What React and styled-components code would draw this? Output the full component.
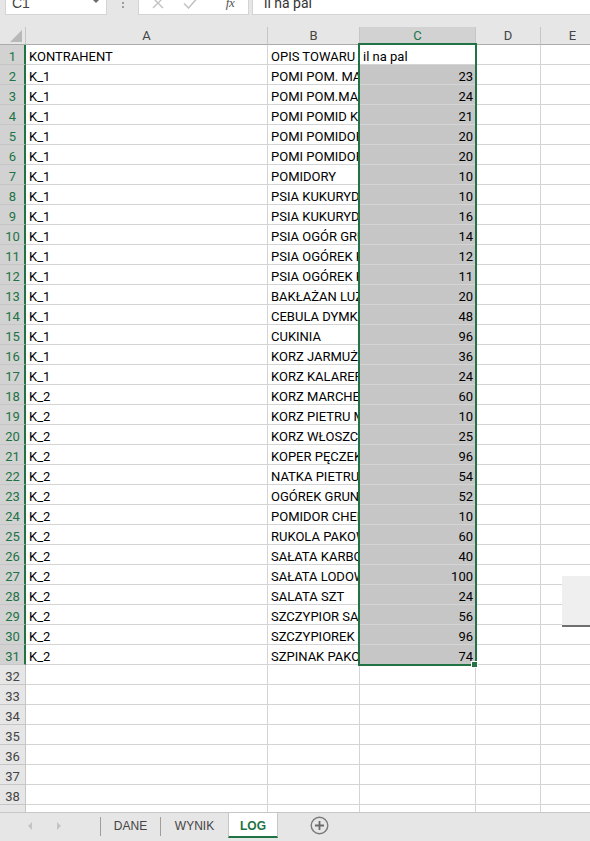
import React from "react";
import styled, { createGlobalStyle } from "styled-components";

const GREEN = "#217346";
const GRID = "#d4d4d4";
const HEAD_BG = "#e6e6e6";
const HEAD_SEL = "#d2d2d2";
const HEAD_LINE = "#c6c6c6";
const SEL_FILL = "#c6c6c6";
const COLS = "26px 242px 92px 116px 65px 64px";

const GlobalStyle = createGlobalStyle`
  html, body { margin: 0; padding: 0; background: ${HEAD_BG}; }
  body { overflow: hidden; font-family: Roboto, "Liberation Sans", sans-serif; }
  * { box-sizing: border-box; }
`;

const Window = styled.div`
  position: relative;
  width: 590px;
  height: 841px;
  overflow: hidden;
  display: flex;
  flex-direction: column;
  background: ${HEAD_BG};
`;

/* ---------- formula bar ---------- */
const FormulaBar = styled.div`
  flex: 0 0 27px;
  display: flex;
  align-items: flex-start;
  overflow: visible;
`;

const NameBox = styled.div`
  margin: -10px 0 0 5px;
  width: 102px;
  height: 25px;
  background: #fff;
  border: 1px solid ${GRID};
  display: flex;
  align-items: center;
  justify-content: space-between;
  padding: 0 6px;
  font-family: "Liberation Sans", sans-serif;
  font-size: 14px;
  color: #444;
`;

const Caret = styled.span`
  width: 0;
  height: 0;
  border-left: 4px solid transparent;
  border-right: 4px solid transparent;
  border-top: 4px solid #6b6b6b;
  margin-top: -3px;
`;

const Grip = styled.div`
  margin: 2px 14px 0 15px;
  display: flex;
  flex-direction: column;
  gap: 2px;
  & > span {
    width: 2px;
    height: 2px;
    background: #9c9c9c;
  }
`;

const FxBox = styled.div`
  margin-top: -10px;
  width: 111px;
  height: 25px;
  background: #fff;
  border: 1px solid ${GRID};
  display: flex;
  align-items: center;
  padding-left: 12px;
  gap: 0;
`;

const FxIconSlot = styled.div`
  width: ${(p) => p.$w}px;
  display: flex;
  justify-content: center;
  align-items: center;
`;

const FxLabel = styled.span`
  font-family: "Liberation Serif", serif;
  font-style: italic;
  font-size: 13px;
  color: #555;
  letter-spacing: -0.5px;
`;

const InputBox = styled.div`
  margin: -10px 0 0 3px;
  flex: 1;
  height: 25px;
  background: #fff;
  border: 1px solid ${GRID};
  border-right: none;
  display: flex;
  align-items: center;
  padding-left: 11px;
  font-size: 14px;
  color: #333;
`;

/* ---------- sheet grid ---------- */
const Sheet = styled.div`
  position: relative;
  flex: 1;
  overflow: hidden;
  background: #fff;
`;

const HeaderRow = styled.div`
  display: grid;
  grid-template-columns: ${COLS};
  height: 18px;
`;

const Corner = styled.div`
  background: ${HEAD_BG};
  border-right: 1px solid ${HEAD_LINE};
  border-bottom: 1px solid #ababab;
  display: flex;
  align-items: flex-end;
  justify-content: flex-end;
  padding: 0 3px 2px 0;
  &::after {
    content: "";
    width: 12px;
    height: 12px;
    background: #b8b8b8;
    clip-path: polygon(100% 0, 100% 100%, 0 100%);
  }
`;

const ColHead = styled.div`
  background: ${(p) => (p.$sel ? HEAD_SEL : HEAD_BG)};
  color: ${(p) => (p.$sel ? GREEN : "#444")};
  border-right: 1px solid ${HEAD_LINE};
  border-bottom: 1px solid ${(p) => (p.$sel ? GREEN : "#ababab")};
  font-size: 13px;
  line-height: 17px;
  text-align: center;
`;

const Row = styled.div`
  display: grid;
  grid-template-columns: ${COLS};
  height: 20px;
`;

const RowHead = styled.div`
  background: ${(p) => (p.$sel ? HEAD_SEL : HEAD_BG)};
  color: ${(p) => (p.$sel ? GREEN : "#444")};
  border-right: ${(p) => (p.$sel ? `2px solid ${GREEN}` : `1px solid ${HEAD_LINE}`)};
  border-bottom: 1px solid ${HEAD_LINE};
  font-size: 13px;
  display: flex;
  align-items: flex-end;
  justify-content: center;
  padding-left: ${(p) => (p.$sel ? 1 : 0)}px;
`;

const Cell = styled.div`
  background: ${(p) => (p.$sel ? SEL_FILL : "#fff")};
  border-right: 1px solid ${GRID};
  border-bottom: 1px solid ${GRID};
  overflow: hidden;
  white-space: nowrap;
  display: flex;
  align-items: flex-end;
  justify-content: ${(p) => (p.$num ? "flex-end" : "flex-start")};
  padding: 0 ${(p) => (p.$num ? 2 : 3)}px 0 3px;
  font-size: 13px;
  color: #000;
`;

const SelectionFrame = styled.div`
  position: absolute;
  left: 358px;
  top: 16px;
  width: 119px;
  height: 623px;
  border: 2px solid ${GREEN};
  pointer-events: none;
`;

const FillHandle = styled.div`
  position: absolute;
  left: 471px;
  top: 634px;
  width: 7px;
  height: 7px;
  background: ${GREEN};
  border: 1px solid #fff;
`;

const FloatPanel = styled.div`
  position: absolute;
  left: 562px;
  top: 576px;
  width: 30px;
  height: 51px;
  background: #efefef;
  border-bottom: 2px solid #6f6f6f;
`;

/* ---------- sheet tabs ---------- */
const TabBar = styled.div`
  flex: 0 0 29px;
  display: flex;
  align-items: flex-start;
  border-top: 1px solid ${HEAD_LINE};
  background: ${HEAD_BG};
  font-family: "Liberation Sans", sans-serif;
  font-size: 12px;
`;

const NavArrows = styled.div`
  width: 100px;
  height: 25px;
  display: flex;
  align-items: center;
  padding-left: 28px;
  gap: 25px;
`;

const Arrow = styled.span`
  width: 0;
  height: 0;
  border-top: 4px solid transparent;
  border-bottom: 4px solid transparent;
  ${(p) =>
    p.$dir === "left"
      ? "border-right: 4px solid #c4c4c4;"
      : "border-left: 4px solid #c4c4c4;"}
`;

const TabSep = styled.span`
  width: 1px;
  height: 19px;
  margin-top: 4px;
  background: #9e9e9e;
`;

const Tab = styled.div`
  width: ${(p) => p.$w}px;
  height: 25px;
  display: flex;
  align-items: center;
  justify-content: center;
  color: ${(p) => (p.$active ? GREEN : "#444")};
  font-weight: ${(p) => (p.$active ? 700 : 400)};
  background: ${(p) => (p.$active ? "#fff" : "transparent")};
  border-left: ${(p) => (p.$active ? `1px solid ${HEAD_LINE}` : "none")};
  border-right: ${(p) => (p.$active ? `1px solid ${HEAD_LINE}` : "none")};
  border-bottom: ${(p) => (p.$active ? `2px solid ${GREEN}` : "none")};
  padding-top: ${(p) => (p.$active ? 2 : 0)}px;
`;

const AddSheet = styled.div`
  margin-left: 32px;
  height: 25px;
  display: flex;
  align-items: center;
`;

const rows = [
  ["KONTRAHENT", "OPIS TOWARU", "il na pal"],
  ["K_1", "POMI POM. MALINOWE", 23],
  ["K_1", "POMI POM.MALINOWE LUZ", 24],
  ["K_1", "POMI POMID KOKTAJL", 21],
  ["K_1", "POMI POMIDOR GAŁĄZKA", 20],
  ["K_1", "POMI POMIDOR MALINA", 20],
  ["K_1", "POMIDORY", 10],
  ["K_1", "PSIA KUKURYDZA", 10],
  ["K_1", "PSIA KUKURYDZA SŁODKA", 16],
  ["K_1", "PSIA OGÓR GRUNT", 14],
  ["K_1", "PSIA OGÓREK KONSERW", 12],
  ["K_1", "PSIA OGÓREK KISZONY", 11],
  ["K_1", "BAKŁAŻAN LUZ", 20],
  ["K_1", "CEBULA DYMKA", 48],
  ["K_1", "CUKINIA", 96],
  ["K_1", "KORZ JARMUŻ", 36],
  ["K_1", "KORZ KALAREPA", 24],
  ["K_2", "KORZ MARCHEW", 60],
  ["K_2", "KORZ PIETRU MIX", 10],
  ["K_2", "KORZ WŁOSZCZYZNA", 25],
  ["K_2", "KOPER PĘCZEK", 96],
  ["K_2", "NATKA PIETRUSZKI", 54],
  ["K_2", "OGÓREK GRUNTOWY", 52],
  ["K_2", "POMIDOR CHERRY", 10],
  ["K_2", "RUKOLA PAKOWANA", 60],
  ["K_2", "SAŁATA KARBOWANA", 40],
  ["K_2", "SAŁATA LODOWA", 100],
  ["K_2", "SALATA SZT", 24],
  ["K_2", "SZCZYPIOR SALOTKA", 56],
  ["K_2", "SZCZYPIOREK PĘCZEK", 96],
  ["K_2", "SZPINAK PAKOWANY", 74],
];

const TOTAL_ROWS = 39;

export default function App() {
  const allRows = Array.from({ length: TOTAL_ROWS }, (_, i) => rows[i] || null);

  return (
    <>
      <GlobalStyle />
      <Window>
        <FormulaBar>
          <NameBox>
            <span>C1</span>
            <Caret />
          </NameBox>
          <Grip>
            <span />
            <span />
          </Grip>
          <FxBox>
            <FxIconSlot $w={14}>
              <svg width="12" height="12" viewBox="0 0 12 12">
                <path d="M1 1 L11 11 M11 1 L1 11" stroke="#c2c2c2" strokeWidth="1.4" fill="none" />
              </svg>
            </FxIconSlot>
            <FxIconSlot $w={22} style={{ marginLeft: 14 }}>
              <svg width="15" height="12" viewBox="0 0 15 12">
                <path d="M1 6.5 L5.5 11 L14 1.5" stroke="#c2c2c2" strokeWidth="1.5" fill="none" />
              </svg>
            </FxIconSlot>
            <FxIconSlot $w={16} style={{ marginLeft: 21 }}>
              <FxLabel>fx</FxLabel>
            </FxIconSlot>
          </FxBox>
          <InputBox>il na pal</InputBox>
        </FormulaBar>

        <Sheet>
          <HeaderRow>
            <Corner />
            {["A", "B", "C", "D", "E"].map((c) => (
              <ColHead key={c} $sel={c === "C"}>
                {c}
              </ColHead>
            ))}
          </HeaderRow>

          {allRows.map((r, i) => {
            const n = i + 1;
            const sel = n <= 31;
            return (
              <Row key={n}>
                <RowHead $sel={sel}>{n}</RowHead>
                <Cell>{r ? r[0] : ""}</Cell>
                <Cell>{r ? r[1] : ""}</Cell>
                <Cell $sel={sel && n > 1} $num={r && typeof r[2] === "number"}>
                  {r ? r[2] : ""}
                </Cell>
                <Cell />
                <Cell />
              </Row>
            );
          })}

          <SelectionFrame />
          <FillHandle />
        </Sheet>

        <TabBar>
          <NavArrows>
            <Arrow $dir="left" />
            <Arrow $dir="right" />
          </NavArrows>
          <TabSep />
          <Tab $w={59}>DANE</Tab>
          <TabSep />
          <Tab $w={67}>WYNIK</Tab>
          <Tab $w={50} $active>
            LOG
          </Tab>
          <AddSheet>
            <svg width="19" height="19" viewBox="0 0 19 19">
              <circle cx="9.5" cy="9.5" r="8.3" stroke="#7a7a7a" strokeWidth="1.4" fill="none" />
              <path d="M9.5 5 V14 M5 9.5 H14" stroke="#6a6a6a" strokeWidth="1.8" />
            </svg>
          </AddSheet>
        </TabBar>

        <FloatPanel />
      </Window>
    </>
  );
}
